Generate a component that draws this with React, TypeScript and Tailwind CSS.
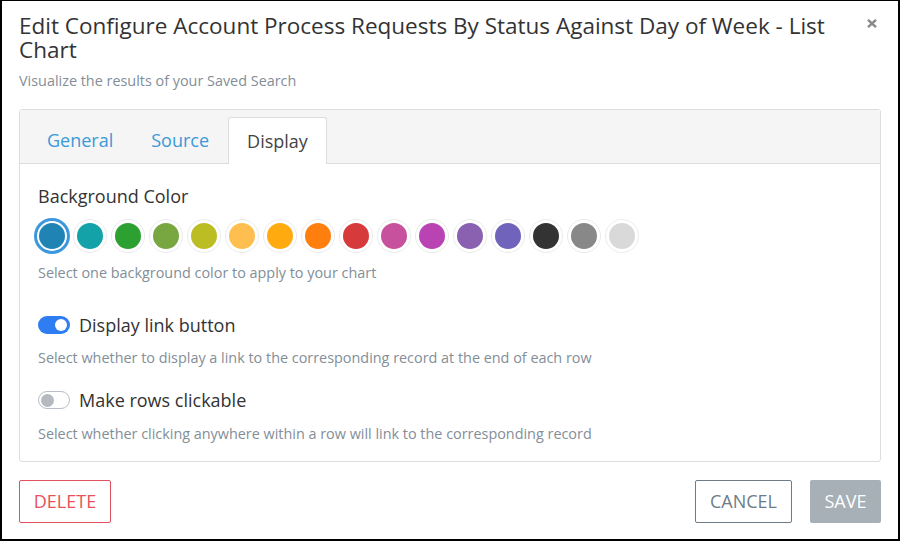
import React from "react";

const colors = [
  "#1f83b4",
  "#12a2a8",
  "#2ca030",
  "#78a641",
  "#bcbd22",
  "#ffbf50",
  "#ffaa0e",
  "#ff7f0e",
  "#d63a3a",
  "#c7519c",
  "#ba43b4",
  "#8a60b0",
  "#6f63bb",
  "#333333",
  "#888888",
  "#d9d9d9",
];

function Toggle({ on }: { on: boolean }) {
  if (on) {
    return (
      <div className="w-[32px] h-[18px] rounded-full bg-[#2f7df2] flex items-center justify-end pr-[3px]">
        <div className="w-[12px] h-[12px] rounded-full bg-white" />
      </div>
    );
  }
  return (
    <div className="w-[32px] h-[18px] rounded-full bg-white border border-[#b8bec4] flex items-center justify-start pl-[2px]">
      <div className="w-[13px] h-[13px] rounded-full bg-[#b4bac0]" />
    </div>
  );
}

export default function App() {
  return (
    <div
      className="w-[900px] h-[541px] bg-white border-t border-l-2 border-r-2 border-b-2 border-black flex flex-col px-[17px] overflow-hidden"
      style={{ fontFamily: '"Open Sans", "Noto Sans", sans-serif' }}
    >
      <div className="flex items-start pt-[13px]">
        <h2 className="flex-1 text-[22.5px] leading-[24px] text-[#333] pr-[20px] font-normal">
          Edit Configure Account Process Requests By Status Against Day of Week - List Chart
        </h2>
        <button className="mt-[1px] mr-[4px] w-[10px] h-[16px] flex items-center justify-center">
          <svg width="10" height="9" viewBox="0 0 10 9">
            <path d="M1 0.8 L9 8.2 M9 0.8 L1 8.2" stroke="#8a8a8a" strokeWidth="2.4" strokeLinecap="butt" />
          </svg>
        </button>
      </div>
      <div className="mt-[9px] text-[14.4px] leading-[20px] text-[#838e98]">
        Visualize the results of your Saved Search
      </div>

      <div className="mt-[18px] border border-[#dddddd] rounded-[3px] flex flex-col">
        <div className="h-[54px] bg-[#f5f5f5] border-b border-[#dddddd] flex items-end pl-[8px]">
          <div className="h-[46px] px-[19px] flex items-center text-[18px] text-[#3a9ad9]">General</div>
          <div className="h-[46px] px-[19px] flex items-center text-[18px] text-[#3a9ad9]">Source</div>
          <div className="h-[47px] -mb-px px-[18px] flex items-center text-[18px] text-[#444] bg-white border border-[#dddddd] border-b-0 rounded-t-[3px]">
            Display
          </div>
        </div>

        <div className="px-[18px] pt-[20px] pb-[17px] flex flex-col">
          <div className="text-[18px] leading-[24px] text-[#333]">Background Color</div>
          <div className="mt-[11px] -ml-[3px] flex gap-[4px]">
            {colors.map((c, i) => (
              <div
                key={c}
                className={
                  i === 0
                    ? "w-[34px] h-[34px] rounded-full border-2 border-[#3c98de] shadow-[0_0_0_1px_#3c98de] bg-white flex items-center justify-center"
                    : "w-[34px] h-[34px] rounded-full border border-[#ececec] bg-white flex items-center justify-center"
                }
              >
                <div className="w-[26px] h-[26px] rounded-full" style={{ backgroundColor: c }} />
              </div>
            ))}
          </div>
          <div className="mt-[10px] text-[14.4px] leading-[20px] text-[#838e98]">
            Select one background color to apply to your chart
          </div>

          <div className="mt-[30px] flex items-center gap-[9px] h-[24px]">
            <Toggle on={true} />
            <span className="text-[18px] leading-[24px] text-[#333]">Display link button</span>
          </div>
          <div className="mt-[11px] text-[14.4px] leading-[20px] text-[#838e98]">
            Select whether to display a link to the corresponding record at the end of each row
          </div>

          <div className="mt-[20px] flex items-center gap-[9px] h-[24px]">
            <Toggle on={false} />
            <span className="text-[18px] leading-[24px] text-[#333]">Make rows clickable</span>
          </div>
          <div className="mt-[12px] text-[14.4px] leading-[20px] text-[#838e98]">
            Select whether clicking anywhere within a row will link to the corresponding record
          </div>
        </div>
      </div>

      <div className="mt-[18px] flex items-center">
        <button className="h-[43px] w-[92px] border border-[#e2505e] rounded-[2px] text-[18px] text-[#e8505b] flex items-center justify-center">
          DELETE
        </button>
        <div className="flex-1" />
        <button className="h-[43px] w-[97px] border border-[#6e7c88] rounded-[2px] text-[18px] text-[#6e7c88] flex items-center justify-center">
          CANCEL
        </button>
        <button className="ml-[18px] h-[43px] w-[71px] bg-[#a7afb7] rounded-[2px] text-[18px] text-white flex items-center justify-center">
          SAVE
        </button>
      </div>
    </div>
  );
}
